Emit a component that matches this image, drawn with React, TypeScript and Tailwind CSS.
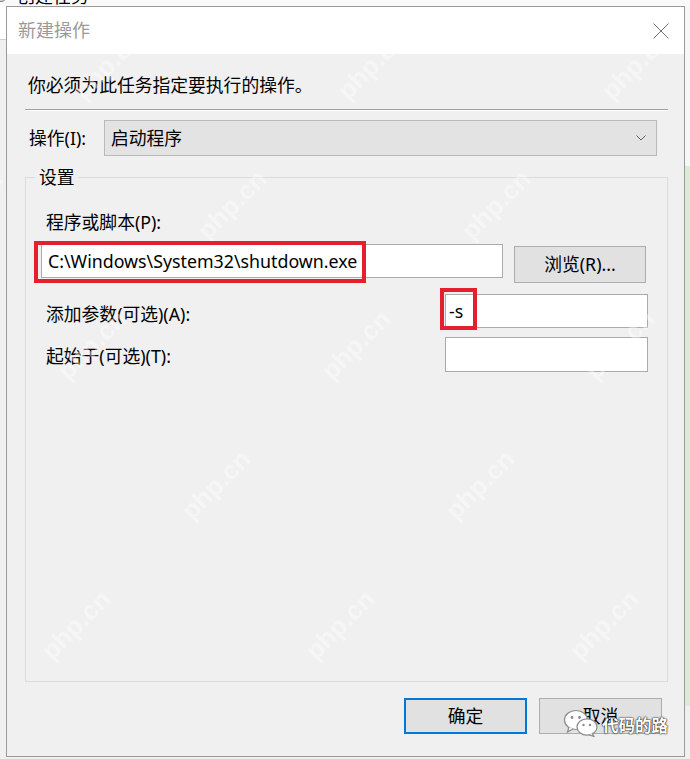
import React from "react";

// php.cn watermark centers, tiled
const marks = [
  [108, 65], [372, 65], [636, 65],
  [-32, 205], [232, 205], [496, 205],
  [92, 345], [356, 345], [620, 345],
  [216, 485], [480, 485],
  [76, 625], [340, 625], [604, 625],
];

const CloseIcon = () => (
  <svg width="16" height="16" viewBox="0 0 16 16" className="block">
    <path d="M0.5 0.5 L15.5 15.5 M15.5 0.5 L0.5 15.5" stroke="#707070" strokeWidth="1" fill="none" />
  </svg>
);

const Chevron = () => (
  <svg width="10" height="6" viewBox="0 0 10 6" className="block">
    <path d="M0.5 0.5 L5 5 L9.5 0.5" stroke="#606060" strokeWidth="1" fill="none" />
  </svg>
);

const WeChat = () => (
  <svg width="36" height="28" viewBox="0 0 36 28" className="block">
    <ellipse cx="13" cy="11" rx="11.5" ry="9.5" fill="#fff" stroke="#8a8a8a" strokeWidth="1.2" />
    <path d="M6 18 L4.5 23 L10 20" fill="#fff" stroke="#8a8a8a" strokeWidth="1.2" />
    <circle cx="9" cy="8.5" r="1.4" fill="#8a8a8a" />
    <circle cx="16.5" cy="8.5" r="1.4" fill="#8a8a8a" />
    <ellipse cx="24" cy="18" rx="10" ry="8.2" fill="#fff" stroke="#8a8a8a" strokeWidth="1.2" />
    <path d="M29 24 L31 27.5 L26 25.6" fill="#fff" stroke="#8a8a8a" strokeWidth="1.2" />
    <circle cx="20.5" cy="16" r="1.2" fill="#8a8a8a" />
    <circle cx="27" cy="16" r="1.2" fill="#8a8a8a" />
  </svg>
);

export default function App() {
  return (
    <div className="relative w-[690px] h-[759px] overflow-hidden bg-[#f0f0f0] text-black text-[17.8px] font-['Noto_Sans','Noto_Sans_CJK_SC',sans-serif]">
      {/* window behind the dialog */}
      <div className="h-[6px] overflow-hidden bg-[#fafafa]">
        <div className="-mt-[16px] flex items-center gap-[10px]">
          <span className="-ml-[5px] w-[12px] h-[12px] rounded-full border border-[#777] bg-[#ddd]" />
          <span className="text-[18px] leading-[24px] text-black">创建任务</span>
        </div>
      </div>

      <div className="flex">
        <div className="w-[6px] flex flex-col">
          <div className="h-[34px] bg-white border-b border-[#d0d0d0]" />
          <div className="flex-1 bg-[#f0f0f0]" />
        </div>

        {/* dialog */}
        <div className="w-[679px] h-[751px] flex flex-col border border-[#9a9a9a] bg-[#f0f0f0]">
          {/* title bar */}
          <div className="h-[47px] bg-white flex items-center justify-between pl-[11px] pr-[15px]">
            <span className="text-[18px] text-[#9a9a9a]">新建操作</span>
            <CloseIcon />
          </div>

          <div className="mt-[19px] ml-[21px] leading-[24px]">你必须为此任务指定要执行的操作。</div>

          <div className="mt-[12px] ml-[18px] mr-[16px] border-t border-[#a0a0a0] border-b border-b-white" />

          {/* action */}
          <div className="mt-[9px] ml-[22px] flex items-center">
            <span className="w-[75px] leading-[24px]">操作(I):</span>
            <div className="w-[553px] h-[36px] flex items-center justify-between pl-[6px] pr-[10px] bg-[#e3e3e3] border border-[#b9b9b9]">
              <span>启动程序</span>
              <Chevron />
            </div>
          </div>

          {/* settings group */}
          <fieldset className="mt-[9px] ml-[18px] w-[643px] h-[517px] border border-[#dcdcdc]">
            <legend className="ml-[9px] px-[4px] leading-[24px]">设置</legend>

            <div className="mt-[21px] ml-[20px] leading-[24px]">程序或脚本(P):</div>

            <div className="mt-[10px] ml-[15px] flex items-start">
              <div className="w-[462px] h-[34px] flex items-center pl-[6px] bg-white border border-[#ababab]">
                C:\Windows\System32\shutdown.exe
              </div>
              <button className="ml-[11px] mt-[2px] w-[132px] h-[37px] bg-[#e1e1e1] border border-[#adadad] flex items-center justify-center">
                浏览(R)...
              </button>
            </div>

            <div className="mt-[11px] ml-[20px] flex items-start">
              <span className="w-[399px] mt-[8px] leading-[24px]">添加参数(可选)(A):</span>
              <div className="w-[203px] h-[34px] flex items-center pl-[3px] bg-white border border-[#ababab]">-s</div>
            </div>

            <div className="mt-[9px] ml-[20px] flex items-start">
              <span className="w-[399px] mt-[7px] leading-[24px]">起始于(可选)(T):</span>
              <div className="w-[203px] h-[35px] bg-white border border-[#ababab]" />
            </div>
          </fieldset>

          {/* buttons */}
          <div className="mt-[16px] mr-[22px] flex justify-end gap-[12px]">
            <button className="w-[123px] h-[36px] bg-[#e1e1e1] border-2 border-[#0078d7] flex items-center justify-center">
              确定
            </button>
            <button className="w-[123px] h-[36px] bg-[#e1e1e1] border border-[#adadad] flex items-center justify-center">
              取消
            </button>
          </div>
        </div>

        <div className="flex-1 flex flex-col">
          <div className="h-[160px] bg-[#f7f7f7]" />
          <div className="h-[540px] bg-[#dcebd6]" />
          <div className="flex-1 bg-[#f0f0f0]" />
        </div>
      </div>

      {/* faint site watermarks */}
      {marks.map(([x, y], i) => (
        <span
          key={i}
          className="absolute -translate-x-1/2 -translate-y-1/2 -rotate-45 text-[26px] font-bold text-white opacity-40 font-['Liberation_Sans',sans-serif] pointer-events-none"
          style={{ left: x, top: y }}
        >
          php.cn
        </span>
      ))}

      {/* red highlight boxes */}
      <div className="absolute left-[34px] top-[241px] w-[332px] h-[42px] border-4 border-[#e5202e]" />
      <div className="absolute left-[440px] top-[288px] w-[37px] h-[42px] border-4 border-[#e5202e]" />

      {/* account watermark */}
      <div className="absolute left-[563px] top-[709px] flex items-center gap-[3px]">
        <WeChat />
        <span className="mt-[6px] text-[16.5px] leading-[20px] text-white font-bold [text-shadow:0_0_2px_#000,0_0_1px_#000]">
          代码的路
        </span>
      </div>
    </div>
  );
}
